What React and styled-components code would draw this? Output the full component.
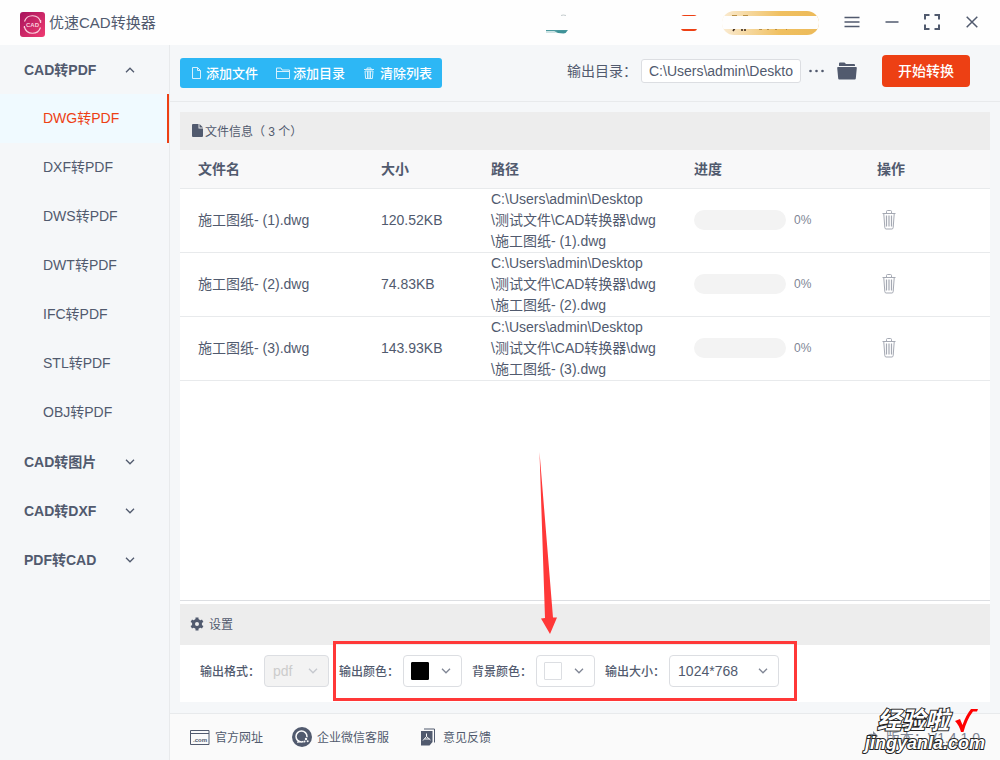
import React from 'react';
import styled, { createGlobalStyle, css } from 'styled-components';

const menus = [
  {
    name: 'CAD转PDF',
    items: ['DWG转PDF', 'DXF转PDF', 'DWS转PDF', 'DWT转PDF', 'IFC转PDF', 'STL转PDF', 'OBJ转PDF'],
  },
  { name: 'CAD转图片', items: [] },
  { name: 'CAD转DXF', items: [] },
  { name: 'PDF转CAD', items: [] },
];

const files = [
  { id: 1, size: '120.52KB', progress: 0 },
  { id: 2, size: '74.83KB', progress: 0 },
  { id: 3, size: '143.93KB', progress: 0 },
];

const Chevron = ({ up }) => (
  <svg width="10" height="6" viewBox="0 0 10 6" fill="none" stroke="currentColor" strokeWidth="1.3">
    <path d={up ? 'M1 5.2 5 1.2 9 5.2' : 'M1 .8 5 4.8 9 .8'} />
  </svg>
);

const LogoIcon = () => (
  <svg width="25" height="25" viewBox="0 0 25 25">
    <defs>
      <linearGradient id="logo" x1="0" y1="0" x2="1" y2="1">
        <stop offset="0" stopColor="#a6125c" />
        <stop offset="1" stopColor="#f03c72" />
      </linearGradient>
    </defs>
    <rect width="25" height="25" rx="3" fill="url(#logo)" />
    <g fill="none" stroke="#f9cfdd" strokeWidth="1.2">
      <path d="M4.5 9.5A8.4 8.4 0 0 1 20.6 10" />
      <path d="M20.5 15.5A8.4 8.4 0 0 1 4.4 15" />
      <path d="M20.6 8v3M4.4 14v2" />
    </g>
    <text x="12.5" y="15" textAnchor="middle" fontSize="6" fontWeight="bold" fill="#f9cfdd">
      CAD
    </text>
  </svg>
);

const TrashIcon = () => (
  <svg width="14" height="20" viewBox="0 0 14 20" fill="none" stroke="#a5a9b3">
    <path d="M.5 3.500h13M4.500 3V1.500q0-1 1-1h3q1 0 1 1V3" />
    <path d="M1.800 4l1 13.500q.1 1.500 1.300 1.500h5.800q1.200 0 1.300-1.500l1-13.500" />
    <path d="M4.500 5.500v11M7 5.500v11M9.500 5.500v11" strokeWidth="1.200" />
  </svg>
);

const App = () => {
  const [active, setActive] = React.useState('DWG转PDF');
  const [opened, setOpened] = React.useState('CAD转PDF');
  const [dir, setDir] = React.useState('C:\\Users\\admin\\Deskto');

  return (
    <Window lang="zh-CN">
      <GlobalStyle />
      <Header>
        <LogoIcon />
        <AppTitle>优速CAD转换器</AppTitle>
        <HeaderTools>
          <Avatar width="24" height="24" viewBox="0 0 24 24">
            <path d="M16 4.500q2-1 5 0" stroke="#c3cbcd" fill="none" />
            <path d="M1 19h22l-1 1H1z" fill="#4d9a9f" />
            <path d="M1 20.500h8l2 1H1z" fill="#9cc8ca" />
            <path d="M9 20.500q6-1.500 13.500-1-1 2.500-4 3-6 0-9.500-2z" fill="#3f9298" />
          </Avatar>
          <Tag />
          <VipButton type="button" aria-label="VIP">
            <svg width="97" height="24" viewBox="0 0 97 24">
              <path d="M10 4.500h5M21 4.500h5M37 18.500h3M45 18.500h2M53 18.500h2M64 18.500h1" stroke="#b98f43" />
              <path d="M13 17l-2 3M20 17v3M23 17v3" stroke="#3d2b1f" strokeWidth="1.600" />
              <rect y="5" width="97" height="13" fill="#fefefe" />
            </svg>
          </VipButton>
          <WindowButton type="button" aria-label="menu">
            <svg width="16" height="12" viewBox="0 0 16 12">
              <path d="M.5 1.500h15M.5 6h15M.5 10.500h15" />
            </svg>
          </WindowButton>
          <WindowButton type="button" aria-label="minimize">
            <svg width="14" height="12" viewBox="0 0 14 12">
              <path d="M.5 6h13" />
            </svg>
          </WindowButton>
          <WindowButton type="button" aria-label="maximize">
            <svg width="16" height="16" viewBox="0 0 16 16">
              <path d="M1 5.500V1h4.500M10.500 1H15v4.500M15 10.500V15h-4.500M5.500 15H1v-4.500" strokeWidth="2" />
            </svg>
          </WindowButton>
          <WindowButton type="button" aria-label="close">
            <svg width="12" height="12" viewBox="0 0 12 12">
              <path d="M.7.7l10.600 10.600M11.300.7.7 11.300" />
            </svg>
          </WindowButton>
        </HeaderTools>
      </Header>

      <Body>
        <Sidebar>
          {menus.map(menu => (
            <React.Fragment key={menu.name}>
              <MenuGroup
                type="button"
                onClick={() => setOpened(opened === menu.name ? '' : menu.name)}
              >
                {menu.name}
                <Chevron up={opened === menu.name} />
              </MenuGroup>
              {opened === menu.name &&
                menu.items.map(item => (
                  <MenuItem
                    key={item}
                    type="button"
                    active={active === item ? 1 : 0}
                    onClick={() => setActive(item)}
                  >
                    {item}
                  </MenuItem>
                ))}
            </React.Fragment>
          ))}
        </Sidebar>

        <Main>
          <Toolbar>
            <FileActions>
              <FileButton type="button">
                <svg width="12" height="12" viewBox="0 0 12 12">
                  <path d="M1.500.5h5l3 3v8h-8zM6.500.5v3h3" />
                </svg>
                添加文件
              </FileButton>
              <FileButton type="button">
                <svg width="14" height="12" viewBox="0 0 14 12">
                  <path d="M.5 11.500v-10.500h4.500l1 2h7.500v8.500zM.5 4.500h13" />
                </svg>
                添加目录
              </FileButton>
              <FileButton type="button">
                <svg width="14" height="12" viewBox="0 0 14 12">
                  <path d="M1 2.500h10M4 2.500v-1.500h4v1.500M2 4l.6 7.500h6.800L10 4zM4.500 4v7M6 4v7M7.500 4v7" />
                </svg>
                清除列表
              </FileButton>
            </FileActions>
            <DirLabel htmlFor="dir">输出目录：</DirLabel>
            <DirInput id="dir" value={dir} onChange={e => setDir(e.target.value)} />
            <IconButton type="button" aria-label="more">
              <svg width="16" height="4" viewBox="0 0 16 4" fill="currentColor">
                <circle cx="1.500" cy="2" r="1.300" />
                <circle cx="7.500" cy="2" r="1.300" />
                <circle cx="13.500" cy="2" r="1.300" />
              </svg>
            </IconButton>
            <IconButton type="button" aria-label="open folder">
              <svg width="20" height="18" viewBox="0 0 20 18" fill="currentColor">
                <path d="M2 4V1.500Q2 .5 3 .5h4.500l1.500 1.500h8q1 0 1 1V4z" />
                <path d="M1 5h18q.9 0 .8 1l-1 10.500q-.1 1-1 1H2.200q-.9 0-1-1L.2 6q-.1-1 .8-1z" />
              </svg>
            </IconButton>
            <StartButton type="button">开始转换</StartButton>
          </Toolbar>

          <Content>
            <FilePanel>
              <FileTitle>
                <svg width="11" height="13" viewBox="0 0 11 13" fill="currentColor">
                  <path d="M1 0h5.500v4.500H11V12q0 1-1 1H1q-1 0-1-1V1q0-1 1-1z" />
                  <path d="M7.500 0 11 3.500H7.500z" />
                </svg>
                文件信息（ 3 个）
              </FileTitle>
              <Table>
                <thead>
                  <tr>
                    <Th width="183px">文件名</Th>
                    <Th width="110px">大小</Th>
                    <Th>路径</Th>
                    <Th width="183px">进度</Th>
                    <Th width="131px">操作</Th>
                  </tr>
                </thead>
                <tbody>
                  {files.map(file => (
                    <tr key={file.id}>
                      <Td>施工图纸- ({file.id}).dwg</Td>
                      <Td>{file.size}</Td>
                      <Td>{`C:\\Users\\admin\\Desktop\n\\测试文件\\CAD转换器\\dwg\n\\施工图纸- (${file.id}).dwg`}</Td>
                      <Td>
                        <Progress>
                          <Track>
                            <Bar style={{ width: `${file.progress}%` }} />
                          </Track>
                          {file.progress}%
                        </Progress>
                      </Td>
                      <Td>
                        <DeleteButton type="button" aria-label="delete">
                          <TrashIcon />
                        </DeleteButton>
                      </Td>
                    </tr>
                  ))}
                </tbody>
              </Table>
            </FilePanel>

            <SettingTitle>
              <svg width="14" height="14" viewBox="-7 -7 14 14">
                <g stroke="currentColor" strokeWidth="3">
                  <path d="M0-6.500v13M-5.700-3.200l11.400 6.400M-5.700 3.200l11.400-6.400" />
                </g>
                <circle r="5" fill="currentColor" />
                <circle r="2" fill="#ededed" />
              </svg>
              设置
            </SettingTitle>
            <Settings>
              <Field>
                <label htmlFor="format">输出格式：</label>
                <SelectBox width="65px">
                  <Select id="format" disabled>
                    <option>pdf</option>
                  </Select>
                  <Chevron />
                </SelectBox>
              </Field>
              <OutputFields>
                <Field>
                  <label htmlFor="color">输出颜色：</label>
                  <ColorButton id="color" type="button">
                    <Swatch color="#000" />
                    <Chevron />
                  </ColorButton>
                </Field>
                <Field>
                  <label htmlFor="background">背景颜色：</label>
                  <ColorButton id="background" type="button">
                    <Swatch color="#fff" />
                    <Chevron />
                  </ColorButton>
                </Field>
                <Field>
                  <label htmlFor="size">输出大小：</label>
                  <SelectBox width="110px">
                    <Select id="size">
                      <option>1024*768</option>
                    </Select>
                    <Chevron />
                  </SelectBox>
                </Field>
                <Highlight />
                <Arrow width="18" height="182" viewBox="0 0 18 182">
                  <path d="M.5 0 14 165.500h4L11 182 2 166.500l4-.5z" fill="#ff3838" />
                </Arrow>
              </OutputFields>
            </Settings>
          </Content>

          <Footer>
            <FooterLink href="#site">
              <svg width="20" height="16" viewBox="0 0 20 16">
                <path d="M.5 1.500h18.500v14H.5zM.5 4.500h18.500" fill="none" stroke="currentColor" />
                <text x="10" y="13" textAnchor="middle" fontSize="6" fontWeight="bold" fill="currentColor">
                  .com
                </text>
              </svg>
              官方网址
            </FooterLink>
            <FooterLink href="#wechat">
              <svg width="20" height="20" viewBox="0 0 20 20">
                <circle cx="10" cy="10" r="10" fill="currentColor" />
                <circle cx="9.500" cy="9.500" r="5.500" fill="none" stroke="#fafafa" strokeWidth="1.500" />
                <path d="M6 13l-1 3 4-1z" fill="#fafafa" />
                <circle cx="14" cy="13" r="3" fill="currentColor" />
                <circle cx="14" cy="12" r="1.200" fill="#fafafa" />
                <circle cx="12.500" cy="14.500" r="1" fill="#fafafa" />
                <circle cx="15.700" cy="14.300" r="1" fill="#fafafa" />
              </svg>
              企业微信客服
            </FooterLink>
            <FooterLink href="#feedback">
              <svg width="20" height="18" viewBox="0 0 20 18">
                <path d="M6 1h10.500v13.500" fill="none" stroke="currentColor" />
                <path d="M3 3h11.500v11l-3 3.500H3z" fill="currentColor" />
                <path d="M8.500 5.500v3L5 12.500M8.500 8.500l4 3.500M6.500 11h5" fill="none" stroke="#fafafa" />
              </svg>
              意见反馈
            </FooterLink>
            <Version>
              <svg width="12" height="12" viewBox="0 0 12 12" fill="currentColor">
                <path d="M0 7Q2 2 7 3V0l5 5-5 4V6Q3 5 0 7z" />
              </svg>
              版本：V1.4.1.0
            </Version>
            <Watermark>
              <BrandRow>
                <BrandName>经验啦</BrandName>
                <svg width="24" height="24" viewBox="0 0 24 24">
                  <path d="M1 12l5-2 2.500 6Q12 6 17 0h7l-1 2.500h-4Q13 10 9.500 23H7Q5 16 1 12z" fill="#f00" />
                </svg>
              </BrandRow>
              <BrandSite>jingyanla.com</BrandSite>
            </Watermark>
          </Footer>
        </Main>
      </Body>
    </Window>
  );
};

export default App;

const GlobalStyle = createGlobalStyle`
  * {
    box-sizing: border-box;
  }

  body {
    margin: 0;
    color: #515a6e;
    font-family: 'Liberation Sans', 'Noto Sans CJK SC', sans-serif;
    font-size: 14px;
  }

  button, input, select {
    margin: 0;
    color: inherit;
    font-family: inherit;
    font-size: 14px;
  }

  button {
    padding: 0;
    border: none;
    background: none;
    cursor: pointer;
  }

  svg {
    flex-shrink: 0;
  }
`;

const Window = styled.div`
  display: flex;
  flex-direction: column;
  min-height: 100vh;
  background-color: #f5f7f9;
`;

const Header = styled.header`
  display: flex;
  align-items: center;
  height: 45px;
  padding: 0 8px 0 20px;
  background-color: #fefefe;

  > svg {
    margin-top: 4px;
  }
`;

const AppTitle = styled.h1`
  margin: 0 0 0 4px;
  font-size: 15px;
  font-weight: normal;
  line-height: 20px;
`;

const HeaderTools = styled.div`
  display: flex;
  align-items: center;
  margin-left: auto;
`;

const Avatar = styled.svg`
  margin-right: 112px;
`;

const Tag = styled.span`
  width: 16px;
  height: 16px;
  margin-right: 25px;
  border-radius: 3px;
  background: linear-gradient(#ed4014 1px, #fefefe 1px, #fefefe 14px, #ed4014 14px);
`;

const VipButton = styled.button`
  height: 24px;
  margin-right: 13px;
  border-radius: 12px;
  background: linear-gradient(90deg, #faebd2, #f0c060 60%, #ecba5a);
  overflow: hidden;

  svg {
    display: block;
  }
`;

const WindowButton = styled.button`
  display: flex;
  align-items: center;
  justify-content: center;
  width: 40px;
  height: 45px;
  padding-bottom: 2px;

  svg {
    fill: none;
    stroke: #515a6e;
    stroke-width: 1.5px;
  }
`;

const Body = styled.div`
  display: flex;
  flex: 1;
`;

const Sidebar = styled.nav`
  display: flex;
  flex-direction: column;
  flex-shrink: 0;
  width: 170px;
  border-right: 1px solid #e8eaec;
`;

const MenuGroup = styled.button`
  display: flex;
  align-items: center;
  justify-content: space-between;
  height: 49px;
  padding: 0 34px 2px 24px;
  font-weight: bold;

  svg {
    margin-top: 2px;
  }
`;

const MenuItem = styled.button`
  height: 49px;
  padding: 0 0 3px 43px;
  border-right: 2px solid transparent;
  text-align: left;

  ${props =>
    props.active &&
    css`
      border-color: #ed4014;
      background-color: #f0faff;
      color: #ed4014;
    `}
`;

const Main = styled.main`
  display: flex;
  flex: 1;
  flex-direction: column;
  min-width: 0;
`;

const Toolbar = styled.div`
  display: flex;
  align-items: center;
  height: 57px;
  padding: 0 30px 4px 10px;
  border-bottom: 1px solid #e8eaec;
`;

const FileActions = styled.div`
  display: flex;
  align-items: center;
  gap: 18px;
  height: 30px;
  margin-top: 4px;
  margin-right: auto;
  padding: 0 10px 1px 11px;
  border-radius: 3px;
  background-color: #2db7f5;
`;

const FileButton = styled.button`
  display: flex;
  align-items: center;
  gap: 3px;
  color: #fff;
  font-size: 13px;
  font-weight: 500;

  svg {
    fill: none;
    stroke: #d5f0fd;
  }
`;

const DirLabel = styled.label`
  margin-right: 4px;
  padding-bottom: 2px;
`;

const DirInput = styled.input`
  width: 160px;
  height: 24px;
  margin-right: 8px;
  padding: 0 7px;
  border: 1px solid #dcdee2;
  border-radius: 3px;
  background-color: #fff;
`;

const IconButton = styled.button`
  display: flex;
  margin-right: 12px;
`;

const StartButton = styled.button`
  width: 88px;
  height: 32px;
  margin-left: 13px;
  padding-bottom: 2px;
  border-radius: 4px;
  background-color: #ed4014;
  color: #fff;
  font-weight: 500;
`;

const Content = styled.div`
  display: flex;
  flex: 1;
  flex-direction: column;
  margin: 10px 10px 11px;
  background-color: #fff;
`;

const FilePanel = styled.section`
  flex: 1;
  margin-bottom: 3px;
  border-bottom: 1px solid #dcdee2;
`;

const FileTitle = styled.h2`
  display: flex;
  align-items: center;
  gap: 2px;
  height: 38px;
  margin: 0;
  padding: 0 12px 2px;
  background-color: #ededed;
  font-size: 12px;
  font-weight: normal;
`;

const Table = styled.table`
  width: 100%;
  border-collapse: collapse;
  table-layout: fixed;
`;

const Th = styled.th`
  width: ${props => props.width || 'auto'};
  height: 38px;
  padding: 0 18px 1px;
  border-bottom: 1px solid #e8eaec;
  background-color: #f8f8f9;
  text-align: left;
`;

const Td = styled.td`
  height: 64px;
  padding: 0 0 0 18px;
  border-bottom: 1px solid #e8eaec;
  line-height: 21px;
  white-space: pre-line;
`;

const Progress = styled.div`
  display: flex;
  align-items: center;
  gap: 8px;
  color: #808695;
  font-size: 12px;
`;

const Track = styled.div`
  width: 92px;
  height: 20px;
  border-radius: 10px;
  background-color: #f3f3f3;
  overflow: hidden;
`;

const Bar = styled.div`
  height: 100%;
  background-color: #2db7f5;
`;

const DeleteButton = styled.button`
  display: flex;
  padding: 0 5px;
`;

const SettingTitle = styled.h2`
  display: flex;
  align-items: center;
  gap: 5px;
  height: 41px;
  margin: 0;
  padding: 0 10px 2px;
  background-color: #ededed;
  font-size: 12px;
  font-weight: normal;
`;

const Settings = styled.div`
  display: flex;
  gap: 10px;
  padding: 10px 20px 15px;
`;

const OutputFields = styled.div`
  position: relative;
  display: flex;
  gap: 10px;
`;

const Field = styled.div`
  display: flex;
  align-items: center;
  gap: 4px;

  label {
    padding-bottom: 2px;
    font-size: 12px;
    font-weight: 500;
    white-space: nowrap;
  }
`;

const SelectBox = styled.div`
  display: grid;
  align-items: center;
  width: ${props => props.width};
  color: #808695;

  > * {
    grid-area: 1 / 1;
  }

  svg {
    justify-self: end;
    margin-right: 11px;
    pointer-events: none;
  }

  &:has(:disabled) {
    color: #c5c8ce;
  }
`;

const Select = styled.select`
  width: 100%;
  height: 32px;
  padding: 0 8px;
  border: 1px solid #dcdee2;
  border-radius: 4px;
  background-color: #fff;
  color: #515a6e;
  appearance: none;

  &:disabled {
    background-color: #f3f3f3;
    color: #ccc;
    opacity: 1;
  }
`;

const ColorButton = styled.button`
  display: flex;
  align-items: center;
  justify-content: space-between;
  width: 59px;
  height: 32px;
  padding: 0 10px 0 7px;
  border: 1px solid #dcdee2;
  border-radius: 4px;
  background-color: #fff;
  color: #808695;
`;

const Swatch = styled.span`
  width: 18px;
  height: 18px;
  border: 1px solid ${props => (props.color === '#fff' ? '#dcdee2' : props.color)};
  border-radius: 1px;
  background-color: ${props => props.color};
`;

const Highlight = styled.div`
  position: absolute;
  top: -14px;
  right: -18px;
  bottom: -14px;
  left: -6px;
  border: 3px solid #ff3838;
  pointer-events: none;
`;

const Arrow = styled.svg`
  position: absolute;
  bottom: 53px;
  left: 200px;
  pointer-events: none;
`;

const Footer = styled.footer`
  position: relative;
  display: flex;
  align-items: center;
  gap: 29px;
  height: 47px;
  padding: 0 20px 1px;
  border-top: 1px solid #e8eaec;
  background-color: #fafafa;
`;

const FooterLink = styled.a`
  display: flex;
  align-items: center;
  gap: 5px;
  color: inherit;
  font-size: 12px;
  text-decoration: none;
`;

const Version = styled.span`
  display: flex;
  align-items: center;
  gap: 8px;
  margin-left: auto;
  color: #808695;
`;

const Watermark = styled.div`
  position: absolute;
  right: 15px;
  bottom: 7px;
  color: #fff;
  font-weight: bold;
  -webkit-text-stroke: 2px #222;
  paint-order: stroke fill;
`;

const BrandRow = styled.div`
  display: flex;
  gap: 5px;
  justify-content: flex-end;
  padding-right: 7px;
`;

const BrandName = styled.span`
  font-size: 24px;
  font-style: italic;
  line-height: 24px;
`;

const BrandSite = styled.div`
  font-size: 18px;
  font-style: italic;
  line-height: 20px;
`;
